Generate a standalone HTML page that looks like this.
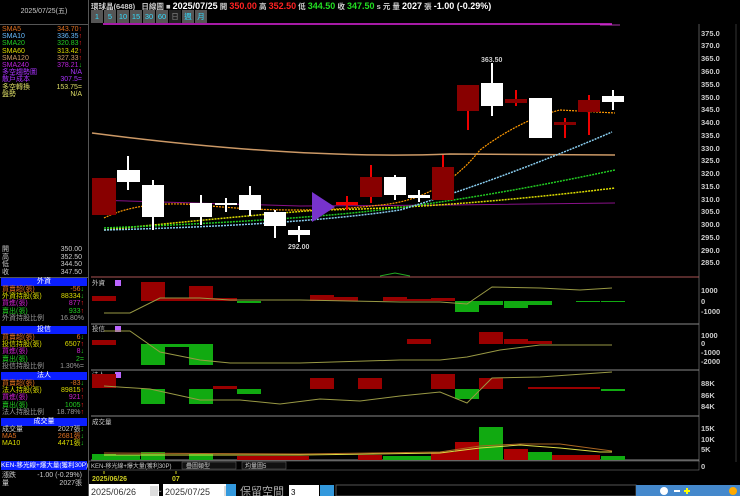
<html><head><style>
body{margin:0;width:740px;height:496px;background:#000;overflow:hidden;font-family:"Liberation Sans","Noto Sans CJK TC",sans-serif;position:relative}
.a{position:absolute;white-space:nowrap}
.l{font-size:7px;line-height:7.2px}
.hd{background:#0b1fff;color:#fff;text-align:center;font-size:7px;height:8px;line-height:8px}
.r{position:absolute;right:4px}
</style></head><body>
<div class="a" style="left:0;top:0;width:88px;height:496px;border-right:1px solid #555"></div>
<div class="a" style="left:0;top:0;width:88px;height:24px;border-bottom:1px solid #555;color:#ccc;font-size:7px;text-align:center;line-height:24px">2025/07/25(五)</div>
<div class="a l" style="left:2px;top:26px;width:84px">
<div style="color:#e07020">SMA5<span class="r">343.70<b style="color:#f22">↑</b></span></div>
<div style="color:#6bf">SMA10<span class="r">336.35<b style="color:#f22">↑</b></span></div>
<div style="color:#2c2">SMA20<span class="r">320.83<b style="color:#f22">↑</b></span></div>
<div style="color:#dd0">SMA60<span class="r">313.42<b style="color:#f22">↑</b></span></div>
<div style="color:#c96">SMA120<span class="r">327.33<b style="color:#f22">↑</b></span></div>
<div style="color:#b2d">SMA240<span class="r">378.21<b style="color:#2c2">↓</b></span></div>
<div style="color:#a3f">多空趨勢圖<span class="r">N/A</span></div>
<div style="color:#a3f">散戶成本<span class="r">307.5=</span></div>
<div style="color:#dd6">多空轉換<span class="r">153.75=</span></div>
<div style="color:#dd6">盤勢<span class="r">N/A</span></div>
</div>
<div class="a l" style="left:2px;top:246px;width:84px;color:#ccc;line-height:7.5px">
<div>開<span class="r">350.00</span></div><div>高<span class="r">352.50</span></div><div>低<span class="r">344.50</span></div><div>收<span class="r">347.50</span></div></div>
<div class="a" style="left:0;top:277px;width:88px;height:1px;background:#555"></div>
<div class="a" style="left:1px;top:278px;width:86px">
<div class="hd">外資</div><div class="l" style="padding:0 1px">
<div style="color:#e07020">買賣超(張)<span class="r" style="right:3px">-56<b style="color:#2c2">↓</b></span></div>
<div style="color:#dd0">外資持股(張)<span class="r" style="right:3px">88334<b style="color:#2c2">↓</b></span></div>
<div style="color:#c2c">買進(張)<span class="r" style="right:3px">877<b style="color:#f22">↑</b></span></div>
<div style="color:#2c2">賣出(張)<span class="r" style="right:3px">933<b style="color:#f22">↑</b></span></div>
<div style="color:#999">外資持股比例<span class="r" style="right:3px">16.80%</span></div></div></div>
<div class="a" style="left:1px;top:326px;width:86px">
<div class="hd">投信</div><div class="l" style="padding:0 1px">
<div style="color:#e07020">買賣超(張)<span class="r" style="right:3px">6<b style="color:#2c2">↓</b></span></div>
<div style="color:#dd0">投信持股(張)<span class="r" style="right:3px">6507<b style="color:#f22">↑</b></span></div>
<div style="color:#c2c">買進(張)<span class="r" style="right:3px">8<b style="color:#2c2">↓</b></span></div>
<div style="color:#2c2">賣出(張)<span class="r" style="right:3px">2=</span></div>
<div style="color:#999">投信持股比例<span class="r" style="right:3px">1.30%=</span></div></div></div>
<div class="a" style="left:1px;top:372px;width:86px">
<div class="hd">法人</div><div class="l" style="padding:0 1px">
<div style="color:#e07020">買賣超(張)<span class="r" style="right:3px">-83<b style="color:#2c2">↓</b></span></div>
<div style="color:#dd0">法人持股(張)<span class="r" style="right:3px">89815<b style="color:#f22">↑</b></span></div>
<div style="color:#c2c">買進(張)<span class="r" style="right:3px">921<b style="color:#f22">↑</b></span></div>
<div style="color:#2c2">賣出(張)<span class="r" style="right:3px">1005<b style="color:#f22">↑</b></span></div>
<div style="color:#999">法人持股比例<span class="r" style="right:3px">18.78%<b style="color:#f22">↑</b></span></div></div></div>
<div class="a" style="left:1px;top:418px;width:86px">
<div class="hd">成交量</div><div class="l" style="padding:0 1px">
<div style="color:#ccc">成交量<span class="r" style="right:3px">2027張<b style="color:#2c2">↓</b></span></div>
<div style="color:#e07020">MA5<span class="r" style="right:3px">2681張<b style="color:#2c2">↓</b></span></div>
<div style="color:#dd0">MA10<span class="r" style="right:3px">4471張<b style="color:#2c2">↓</b></span></div></div></div>
<div class="a" style="left:1px;top:461px;width:86px;height:9px;background:#0b1fff;color:#fff;font-size:6.5px;line-height:9px">KEN-移光線+爆大量(獲利30P)</div>
<div class="a l" style="left:2px;top:472px;width:84px;color:#ccc;line-height:8px"><div>漲跌<span class="r">-1.00 (-0.29%)</span></div><div>量<span class="r">2027張</span></div></div>

<div class="a" style="left:91px;top:1px;font-size:7.5px;color:#ccc;font-weight:bold">環球晶(6488) &nbsp; 日線圖 ■ <span style="font-size:9px;color:#fff">2025/07/25</span> 開 <span style="font-size:9px;color:#f22">350.00</span> 高 <span style="font-size:9px;color:#f22">352.50</span> 低 <span style="font-size:9px;color:#2d2">344.50</span> 收 <span style="font-size:9px;color:#2d2">347.50</span> s 元 量 <span style="font-size:9px;color:#fff">2027</span> 張 <span style="font-size:9px;color:#fff">-1.00 (-0.29%)</span></div>
<div class="a" style="left:91px;top:10px;height:13px;display:flex;font-size:7.5px;color:#3df;line-height:13px">
<span style="width:12px;background:#555;text-align:center;margin-right:1px">1</span><span style="width:12px;background:#555;text-align:center;margin-right:1px">5</span><span style="width:12px;background:#555;text-align:center;margin-right:1px">10</span><span style="width:12px;background:#555;text-align:center;margin-right:1px">15</span><span style="width:12px;background:#555;text-align:center;margin-right:1px">30</span><span style="width:12px;background:#555;text-align:center;margin-right:1px">60</span><span style="width:12px;background:#222;color:#888;text-align:center;margin-right:1px">日</span><span style="width:12px;background:#555;text-align:center;margin-right:1px">週</span><span style="width:12px;background:#555;text-align:center">月</span></div>

<svg class="a" style="left:88px;top:0" width="652" height="496" viewBox="88 0 652 496">
<g stroke="#555" fill="none"><line x1="699" y1="24" x2="699" y2="462"/><line x1="91" y1="277" x2="699" y2="277" stroke="#a55"/><line x1="91" y1="324" x2="699" y2="324" stroke="#888"/><line x1="91" y1="370" x2="699" y2="370" stroke="#888"/><line x1="91" y1="416" x2="699" y2="416" stroke="#888"/><line x1="91" y1="460" x2="699" y2="460" stroke="#888"/><line x1="736" y1="24" x2="736" y2="462" stroke="#333"/></g>
<line x1="103" y1="24" x2="612" y2="24" stroke="#d2d" stroke-width="1.5"/><line x1="600" y1="25" x2="620" y2="25" stroke="#a3a"/>
<g font-size="7.5" fill="#ccc" font-weight="bold">
<text x="701" y="36">375.0</text><text x="701" y="48">370.0</text><text x="701" y="61">365.0</text><text x="701" y="74">360.0</text><text x="701" y="87">355.0</text><text x="701" y="100">350.0</text><text x="701" y="112">345.0</text><text x="701" y="125">340.0</text><text x="701" y="138">335.0</text><text x="701" y="151">330.0</text><text x="701" y="163">325.0</text><text x="701" y="176">320.0</text><text x="701" y="189">315.0</text><text x="701" y="202">310.0</text><text x="701" y="214">305.0</text><text x="701" y="227">300.0</text><text x="701" y="240">295.0</text><text x="701" y="253">290.0</text><text x="701" y="265">285.0</text>
<text x="701" y="293">1000</text><text x="701" y="304">0</text><text x="701" y="314">-1000</text>
<text x="701" y="338">1000</text><text x="701" y="346">0</text><text x="701" y="355">-1000</text><text x="701" y="364">-2000</text>
<text x="701" y="386">88K</text><text x="701" y="398">86K</text><text x="701" y="409">84K</text>
<text x="701" y="431">15K</text><text x="701" y="442">10K</text><text x="701" y="452">5K</text><text x="701" y="469">0</text>
<text x="481" y="62" font-size="7">363.50</text><text x="288" y="249" font-size="7">292.00</text>
</g>
<!-- MAs -->
<path d="M92 133 Q300 160 450 154 L615 155" stroke="#c96" stroke-width="1.5" fill="none"/>
<path d="M92 200 L300 206 L450 205 L615 203" stroke="#818" stroke-width="1" fill="none"/>
<path d="M104 230 Q250 215 320 210 Q450 208 615 188" stroke="#dd0" stroke-width="1.5" fill="none" stroke-dasharray="2 1"/>
<path d="M104 228 Q250 222 330 215 Q450 205 615 170" stroke="#2c2" stroke-width="1.5" fill="none" stroke-dasharray="2 1"/>
<path d="M104 230 Q300 225 400 210 Q500 180 612 132" stroke="#8ce" stroke-width="1.5" fill="none" stroke-dasharray="2 1"/>
<path d="M104 218 Q140 200 200 205 Q300 215 380 205 Q440 200 480 150 Q520 120 560 110 L615 113" stroke="#f90" stroke-width="1.2" fill="none" stroke-dasharray="2 1"/>
<!-- candles -->
<g stroke-width="2">
<rect x="92" y="178" width="24" height="37" fill="#800"/>
<line x1="128" y1="156" x2="128" y2="190" stroke="#fff"/><rect x="117" y="170" width="23" height="12" fill="#fff"/>
<line x1="153" y1="180" x2="153" y2="230" stroke="#fff"/><rect x="142" y="185" width="22" height="32" fill="#fff"/>
<line x1="201" y1="195" x2="201" y2="225" stroke="#fff"/><rect x="190" y="203" width="22" height="14" fill="#fff"/>
<line x1="226" y1="198" x2="226" y2="212" stroke="#fff"/><rect x="215" y="203" width="22" height="2" fill="#fff"/>
<line x1="250" y1="186" x2="250" y2="216" stroke="#fff"/><rect x="239" y="195" width="22" height="15" fill="#fff"/>
<line x1="275" y1="210" x2="275" y2="238" stroke="#fff"/><rect x="264" y="212" width="22" height="14" fill="#fff"/>
<line x1="299" y1="226" x2="299" y2="242" stroke="#fff"/><rect x="288" y="230" width="22" height="5" fill="#fff"/>
<polygon points="312,192 312,222 335,207" fill="#73c"/>
<line x1="347" y1="196" x2="347" y2="210" stroke="#e00"/><rect x="336" y="202" width="22" height="3" fill="#e00"/>
<line x1="371" y1="165" x2="371" y2="203" stroke="#e00"/><rect x="360" y="177" width="22" height="20" fill="#800"/>
<line x1="395" y1="175" x2="395" y2="200" stroke="#fff"/><rect x="384" y="177" width="22" height="18" fill="#fff"/>
<line x1="419" y1="190" x2="419" y2="202" stroke="#fff"/><rect x="408" y="195" width="22" height="3" fill="#fff"/>
<line x1="443" y1="155" x2="443" y2="200" stroke="#e00"/><rect x="432" y="167" width="22" height="33" fill="#800"/>
<line x1="468" y1="111" x2="468" y2="130" stroke="#e00"/><rect x="457" y="85" width="22" height="26" fill="#800"/>
<line x1="492" y1="63" x2="492" y2="116" stroke="#fff"/><rect x="481" y="83" width="22" height="23" fill="#fff"/>
<line x1="516" y1="90" x2="516" y2="106" stroke="#e00"/><rect x="505" y="99" width="22" height="4" fill="#800"/>
<rect x="529" y="98" width="23" height="40" fill="#fff"/>
<line x1="565" y1="118" x2="565" y2="138" stroke="#e00"/><rect x="554" y="122" width="22" height="3" fill="#800"/>
<line x1="589" y1="95" x2="589" y2="135" stroke="#e00"/><rect x="578" y="100" width="22" height="12" fill="#800"/>
<line x1="613" y1="90" x2="613" y2="110" stroke="#fff"/><rect x="602" y="96" width="22" height="6" fill="#fff"/>
</g>
<path d="M380 276 L395 273 L410 276" stroke="#2a2" fill="none"/>
<!-- 外資 -->
<g font-size="6.5" fill="#ccc"><text x="92" y="285">外資</text><text x="92" y="331">投信</text><text x="92" y="377">法人</text><text x="92" y="424">成交量</text></g>
<rect x="115" y="280" width="6" height="6" fill="#b6f"/><rect x="115" y="326" width="6" height="6" fill="#b6f"/><rect x="115" y="372" width="6" height="6" fill="#b6f"/>
<g fill="#900">
<rect x="92" y="296" width="24" height="5"/><rect x="141" y="282" width="24" height="19"/><rect x="165" y="298" width="24" height="3"/><rect x="189" y="286" width="24" height="15"/><rect x="213" y="298" width="24" height="3"/><rect x="310" y="295" width="24" height="6"/><rect x="334" y="297" width="24" height="4"/><rect x="383" y="297" width="24" height="4"/><rect x="407" y="299" width="24" height="2"/><rect x="431" y="298" width="24" height="3"/>
</g>
<g fill="#1a1">
<rect x="237" y="301" width="24" height="2"/><rect x="455" y="301" width="24" height="11"/><rect x="479" y="301" width="24" height="4"/><rect x="504" y="301" width="24" height="7"/><rect x="528" y="301" width="24" height="4"/><rect x="576" y="301" width="24" height="1"/><rect x="601" y="301" width="24" height="1"/>
</g>
<path d="M104 313 L130 313 L160 298 L200 298 L230 300 L300 300 L400 302 L440 302 L467 304 L492 287 L540 288 L580 290 L612 288" stroke="#994" fill="none"/>
<!-- 投信 -->
<g fill="#900"><rect x="92" y="340" width="24" height="5"/><rect x="407" y="339" width="24" height="5"/><rect x="479" y="332" width="24" height="12"/><rect x="504" y="339" width="24" height="5"/><rect x="528" y="341" width="24" height="3"/></g>
<g fill="#1a1"><rect x="141" y="344" width="24" height="21"/><rect x="165" y="344" width="24" height="3"/><rect x="189" y="344" width="24" height="21"/></g>
<path d="M104 331 L130 331 L160 352 L200 360 L230 363 L300 363 L400 360 L440 360 L467 357 L500 350 L540 345 L612 345" stroke="#994" fill="none"/>
<!-- 法人 -->
<g fill="#900"><rect x="92" y="374" width="24" height="14"/><rect x="213" y="386" width="24" height="3"/><rect x="310" y="378" width="24" height="11"/><rect x="358" y="378" width="24" height="11"/><rect x="431" y="374" width="24" height="15"/><rect x="479" y="378" width="24" height="11"/><rect x="528" y="387" width="72" height="2"/></g>
<g fill="#1a1"><rect x="141" y="389" width="24" height="15"/><rect x="189" y="389" width="24" height="15"/><rect x="237" y="389" width="24" height="5"/><rect x="455" y="389" width="24" height="10"/><rect x="601" y="389" width="24" height="2"/></g>
<path d="M104 386 L150 389 L200 400 L240 400 L280 404 L320 399 L360 401 L400 396 L440 392 L467 403 L492 378 L540 377 L612 372" stroke="#994" fill="none"/>
<!-- 量 -->
<g fill="#1a1"><rect x="92" y="454" width="24" height="6"/><rect x="116" y="455" width="24" height="5"/><rect x="141" y="452" width="24" height="8"/><rect x="189" y="454" width="24" height="6"/><rect x="383" y="456" width="24" height="4"/><rect x="407" y="456" width="24" height="4"/><rect x="479" y="427" width="24" height="33"/><rect x="528" y="452" width="24" height="8"/><rect x="601" y="456" width="24" height="4"/></g>
<g fill="#a00"><rect x="237" y="456" width="72" height="4"/><rect x="358" y="455" width="24" height="5"/><rect x="431" y="452" width="24" height="8"/><rect x="455" y="442" width="24" height="18"/><rect x="504" y="449" width="24" height="11"/><rect x="552" y="455" width="48" height="5"/></g>
<path d="M104 455 L300 455 L440 453 L480 448 L520 445 L560 448 L600 452 L612 452" stroke="#dd4" fill="none"/>
<path d="M104 453 L300 454 L440 452 L480 446 L520 444 L560 444 L612 451" stroke="#a62" fill="none"/>
<!-- toolbar -->
<rect x="89" y="461" width="610" height="9" fill="#000" stroke="#888" stroke-width="0.5"/>
<rect x="182" y="462" width="54" height="7" fill="#111" stroke="#666" stroke-width="0.5"/>
<rect x="242" y="462" width="44" height="7" fill="#111" stroke="#666" stroke-width="0.5"/>
<g font-size="6" fill="#ccc"><text x="91" y="468">KEN-移光線+爆大量(獲利30P)</text><text x="186" y="468">疊圖類型</text><text x="245" y="468">均量圖5</text></g>
<g font-size="7" fill="#cc2" font-weight="bold"><text x="92" y="481">2025/06/26</text><text x="172" y="481">07</text></g>
<line x1="104" y1="471" x2="104" y2="474" stroke="#cc2"/><line x1="176" y1="471" x2="176" y2="474" stroke="#cc2"/>
<!-- bottom -->
<rect x="89" y="484" width="70" height="12" fill="#fff"/><rect x="150" y="486" width="8" height="10" fill="#ddd"/>
<rect x="163" y="484" width="70" height="12" fill="#fff"/><rect x="224" y="486" width="8" height="10" fill="#ddd"/>
<rect x="226" y="484" width="10" height="12" fill="#39d"/>
<text x="157" y="494" font-size="8" fill="#ccc">~</text>
<g font-size="9" fill="#333"><text x="91" y="495">2025/06/26</text><text x="165" y="495">2025/07/25</text></g>
<text x="240" y="495" font-size="11" fill="#aaa">保留空間</text>
<rect x="289" y="485" width="30" height="11" fill="#fff"/><text x="291" y="495" font-size="8" fill="#000">3</text>
<rect x="320" y="485" width="14" height="11" fill="#39d"/>
<rect x="336" y="485" width="300" height="11" fill="#000" stroke="#555"/>
<rect x="636" y="485" width="104" height="11" fill="#48c"/>
<circle cx="664" cy="491" r="4" fill="#fff"/><rect x="674" y="490" width="6" height="2" fill="#fff"/><rect x="684" y="490" width="6" height="2" fill="#ff0"/><rect x="686" y="488" width="2" height="6" fill="#ff0"/>
<circle cx="733" cy="491" r="4" fill="#fa0"/>
</svg>
</body></html>
